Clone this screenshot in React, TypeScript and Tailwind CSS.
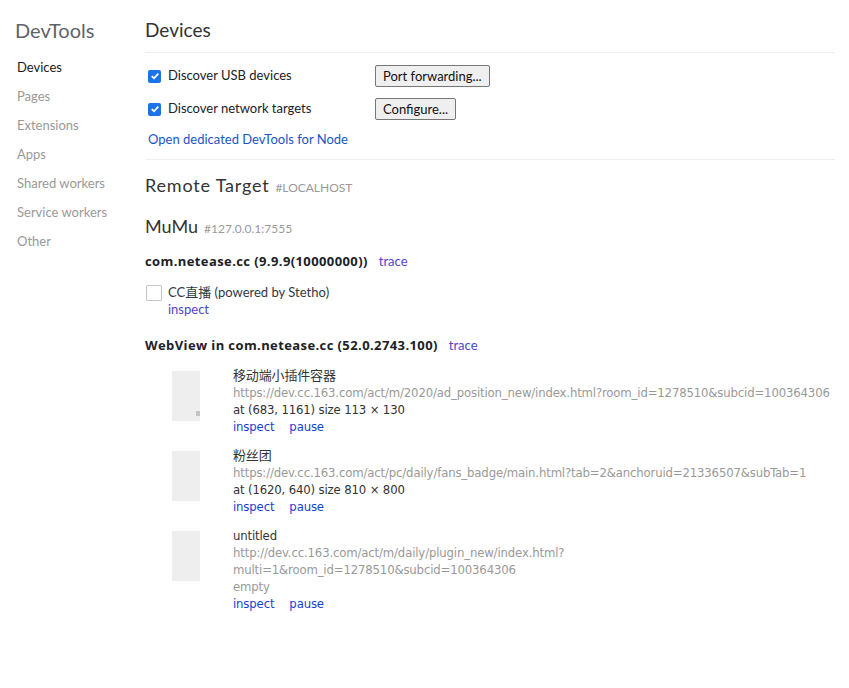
import React from 'react';

const sans = "font-['Segoe_UI','Lato','Noto_Sans_CJK_SC',sans-serif]";
const boldFont = "font-['Open_Sans','Noto_Sans_CJK_SC',sans-serif]";
const narrow = "font-['Liberation_Sans_Narrow','DejaVu_Sans_Condensed','Noto_Sans_CJK_SC',sans-serif]";

const navItems = ['Devices', 'Pages', 'Extensions', 'Apps', 'Shared workers', 'Service workers', 'Other'];

interface WebViewItem {
    title: string;
    url: string[];
    info: string;
    infoMuted?: boolean;
    mark?: boolean;
}

const webViews: WebViewItem[] = [
    {
        title: '移动端小插件容器',
        url: ['https://dev.cc.163.com/act/m/2020/ad_position_new/index.html?room_id=1278510&subcid=100364306'],
        info: 'at (683, 1161)  size 113 × 130',
        mark: true,
    },
    {
        title: '粉丝团',
        url: ['https://dev.cc.163.com/act/pc/daily/fans_badge/main.html?tab=2&anchoruid=21336507&subTab=1'],
        info: 'at (1620, 640)  size 810 × 800',
    },
    {
        title: 'untitled',
        url: ['http://dev.cc.163.com/act/m/daily/plugin_new/index.html?', 'multi=1&room_id=1278510&subcid=100364306'],
        info: 'empty',
        infoMuted: true,
    },
];

const CheckedBox = () => (
    <span className="w-[13px] h-[13px] rounded-[2px] bg-[#1a73e8] flex items-center justify-center shrink-0">
        <svg width="10" height="10" viewBox="0 0 10 10">
            <path d="M1.8 5.2 L4 7.3 L8.3 2.6" stroke="white" strokeWidth="1.8" fill="none" />
        </svg>
    </span>
);

const PageThumb = ({ mark }: { mark?: boolean }) => (
    <div className="relative w-[28px] h-[50px] bg-[#eeeeee] shrink-0">
        {mark && <span className="absolute right-0 bottom-[5px] w-[4px] h-[5px] bg-[#c4c4c4]" />}
    </div>
);

const App = () => {
    return (
        <div className={`${sans} flex w-[849px] h-[688px] bg-white text-[13px] text-[#303942]`}>
            {/* sidebar */}
            <aside className="w-[145px] shrink-0 pl-[15px] pt-[17px]">
                <h1 className="text-[20px] leading-[26px] text-[#5f6368] mb-[15px]">DevTools</h1>
                <ul className="pl-[2px]">
                    {navItems.map((item, i) => (
                        <li
                            key={item}
                            className={`h-[29px] leading-[18px] ${i === 0 ? 'text-[#202124]' : 'text-[#999999]'}`}
                        >
                            {item}
                        </li>
                    ))}
                </ul>
            </aside>

            {/* content */}
            <main className="flex-1 pr-[14px] pt-[17px]">
                <h2 className="text-[19px] leading-[26px] text-[#333333] pb-[9px] border-b border-[#eeeeee]">Devices</h2>

                <div className="pt-[12px] pl-[3px] pb-[11px] border-b border-[#eeeeee]">
                    <div className="flex items-center h-[22px]">
                        <label className="flex items-center gap-[7px] w-[227px] text-[#202124]">
                            <CheckedBox />
                            Discover USB devices
                        </label>
                        <button className="h-[22px] px-[7px] border border-[#767676] rounded-[2px] bg-[#efefef] text-[#111] leading-none">
                            Port forwarding...
                        </button>
                    </div>
                    <div className="flex items-center h-[22px] mt-[11px]">
                        <label className="flex items-center gap-[7px] w-[227px] text-[#202124]">
                            <CheckedBox />
                            Discover network targets
                        </label>
                        <button className="h-[22px] px-[7px] border border-[#767676] rounded-[2px] bg-[#efefef] text-[#111] leading-none">
                            Configure...
                        </button>
                    </div>
                    <a className="block mt-[10px] text-[#1a55c6] leading-[18px]">Open dedicated DevTools for Node</a>
                </div>

                <div className="pt-[13px]">
                    <div className="flex items-baseline gap-[6px]">
                        <span className="text-[18px] leading-[24px] tracking-[0.8px] text-[#333333]">Remote Target</span>
                        <span className="text-[12px] text-[#999999]">#LOCALHOST</span>
                    </div>

                    <div className="flex items-baseline gap-[6px] mt-[17px]">
                        <span className="text-[18px] leading-[24px] text-[#333333]">MuMu</span>
                        <span className="text-[12px] text-[#999999]">#127.0.0.1:7555</span>
                    </div>

                    <div className="flex items-baseline gap-[11px] mt-[14px]">
                        <span className={`${boldFont} font-bold tracking-[0.4px] text-[#202124]`}>com.netease.cc (9.9.9(10000000))</span>
                        <a className="text-[#5046c8]">trace</a>
                    </div>

                    <div className="flex mt-[12px] pl-[1px]">
                        <span className="w-[16px] h-[16px] border border-[#c6c6c6] rounded-[1px] shrink-0 mt-[1px]" />
                        <div className="pl-[6px] leading-[17px]">
                            <div className="text-[#303942]">CC直播 (powered by Stetho)</div>
                            <a className="text-[#5046c8]">inspect</a>
                        </div>
                    </div>

                    <div className="flex items-baseline gap-[11px] mt-[18px]">
                        <span className={`${boldFont} font-bold tracking-[0.4px] text-[#202124]`}>WebView in com.netease.cc (52.0.2743.100)</span>
                        <a className="text-[#5046c8]">trace</a>
                    </div>

                    <div className="flex flex-col gap-[12px] mt-[12px] pl-[27px]">
                        {webViews.map((wv) => (
                            <div key={wv.title} className="flex">
                                <div className="pt-[4px]">
                                    <PageThumb mark={wv.mark} />
                                </div>
                                <div className={`${narrow} pl-[33px] text-[13px] leading-[17px] tracking-[-0.15px] whitespace-nowrap`}>
                                    <div className="text-[#333333]">{wv.title}</div>
                                    {wv.url.map((u) => (
                                        <div key={u} className="text-[#999999]">{u}</div>
                                    ))}
                                    <div className={wv.infoMuted ? 'text-[#999999]' : 'text-[#333333]'}>{wv.info}</div>
                                    <div className="flex gap-[15px]">
                                        <a className="text-[#1a3fd0]">inspect</a>
                                        <a className="text-[#1a3fd0]">pause</a>
                                    </div>
                                </div>
                            </div>
                        ))}
                    </div>
                </div>
            </main>
        </div>
    );
};

export default App;
